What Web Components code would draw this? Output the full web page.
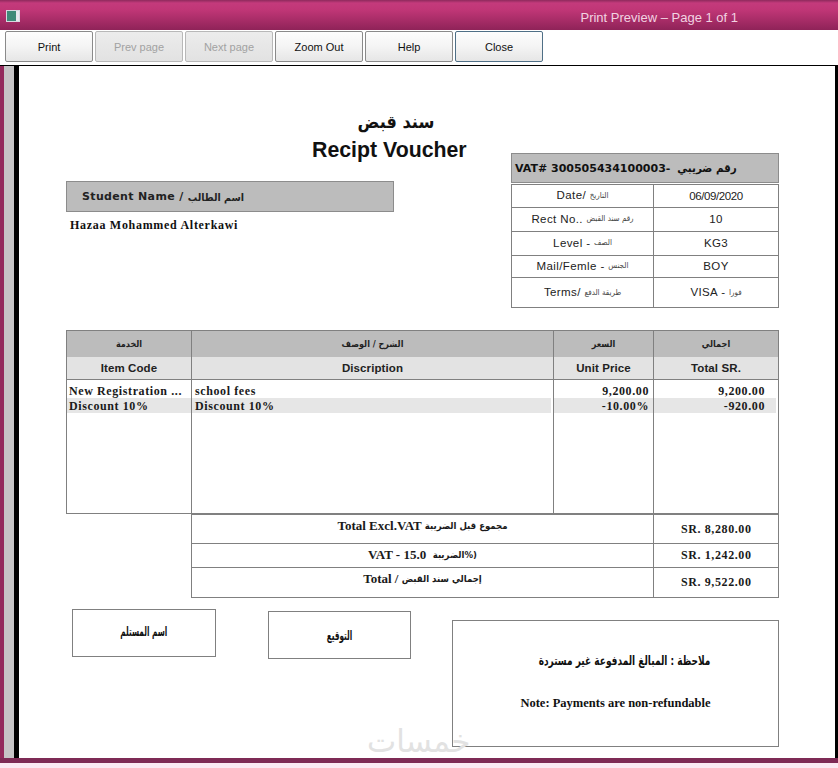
<!DOCTYPE html>
<html>
<head>
<meta charset="utf-8">
<title>Print Preview</title>
<style>
  html, body { margin: 0; padding: 0; background: #fff; overflow: hidden; }
</style>
</head>
<body>
<preview-window>
  <tool-button>Print</tool-button>
  <tool-button disabled>Prev page</tool-button>
  <tool-button disabled>Next page</tool-button>
  <tool-button>Zoom Out</tool-button>
  <tool-button>Help</tool-button>
  <tool-button focused>Close</tool-button>
  <receipt-page slot="page"></receipt-page>
</preview-window>

<script>
const SANS = '"Liberation Sans", "DejaVu Sans Condensed", "DejaVu Sans", sans-serif';
const SERIF = '"Liberation Serif", "DejaVu Sans Condensed", "DejaVu Sans", serif';
const ARABIC = '"DejaVu Sans Condensed", "DejaVu Sans", sans-serif';

class PreviewWindow extends HTMLElement {
  constructor() {
    super();
    this.attachShadow({ mode: 'open' });
    this.shadowRoot.innerHTML = `
      <style>
        :host { display: flex; flex-direction: column; width: 838px; height: 768px; overflow: hidden; background: #fff; }
        .title {
          height: 30px; flex: none; box-sizing: border-box; display: flex; align-items: center;
          padding: 4px 100px 0 6px; justify-content: space-between; color: #f2d3e2;
          font: 13px ${SANS};
          background: linear-gradient(#8e2a5c 0, #c43a7c 3px, #c03676 10px, #8f2358 30px);
        }
        .icon { width: 14px; height: 12px; margin-top: -3px; background: linear-gradient(90deg, #3f8a78 0 9px, #e8e8ee 9px); border: 1px solid #d8d8e0; box-sizing: border-box; }
        .tools { height: 36px; flex: none; box-sizing: border-box; display: flex; gap: 2px; padding: 1px 0 0 5px; background: #fff; border-bottom: 1px solid #000; }
        .body { flex: none; height: 692px; display: flex; }
        .edge { width: 4px; background: #932a5c; }
        .gutter { width: 10px; background: #c6c4c6; }
        .rule { width: 5px; background: #000; }
        .sheet { flex: 1; min-width: 0; background: #fff; }
        .rule.right { width: 3px; }
        .bottom { height: 5px; flex: none; background: #7e2a55; }
        .under { height: 5px; flex: none; background: #fbeaf3; }
      </style>
      <div class="title"><span class="icon"></span><span>Print Preview &ndash; Page 1 of 1</span></div>
      <div class="tools"><slot></slot></div>
      <div class="body">
        <div class="edge"></div><div class="gutter"></div><div class="rule"></div>
        <div class="sheet"><slot name="page"></slot></div>
        <div class="rule right"></div>
      </div>
      <div class="bottom"></div>
      <div class="under"></div>
    `;
  }
}

class ToolButton extends HTMLElement {
  constructor() {
    super();
    this.attachShadow({ mode: 'open' });
    this.shadowRoot.innerHTML = `
      <style>
        :host {
          display: flex; align-items: center; justify-content: center; box-sizing: border-box;
          width: 88px; height: 31px; border: 1px solid #8a8a8a; border-radius: 2px;
          font: 11px ${SANS}; color: #111;
          background: linear-gradient(#fdfdfd, #f4f4f4 50%, #e6e6e6);
        }
        :host([disabled]) { color: #a2a2a2; border-color: #b8b8b8; background: linear-gradient(#ececec, #e2e2e2); }
        :host([focused]) { border-color: #4f6f86; }
      </style>
      <slot></slot>
    `;
  }
}

class InfoTable extends HTMLElement {
  constructor() {
    super();
    this.attachShadow({ mode: 'open' });
    this.rows = [
      ['Date/ ', 'التاريخ', '06/09/2020', '', 23],
      ['Rect No.. ', 'رقم سند القبض', '10', '', 24],
      ['Level - ', 'الصف', 'KG3', '', 24],
      ['Mail/Femle - ', 'الجنس', 'BOY', '', 22],
      ['Terms/ ', 'طريقة الدفع', 'VISA - ', 'فورا', 30]
    ];
    const rows = this.rows.map(r => `
      <div class="row" style="height:${r[4]}px">
        <div class="cell first">${r[0]}<small>${r[1]}</small></div>
        <div class="cell ${r[2].length > 8 ? 'tight' : ''}">${r[2]}<small>${r[3]}</small></div>
      </div>`).join('');
    this.shadowRoot.innerHTML = `
      <style>
        :host { display: block; width: 268px; }
        .vat {
          box-sizing: border-box; height: 30px; background: #bcbcbc; border: 1px solid #8c8c8c;
          display: flex; align-items: center; padding: 0 3px; white-space: nowrap;
          font: bold 11px "DejaVu Sans", sans-serif; color: #111;
        }
        .vat b { font: bold 11.5px ${ARABIC}; margin-left: 7px; }
        .table { margin-top: 1px; border: 1px solid #808080; }
        .row { display: grid; grid-template-columns: 142px 1fr; box-sizing: border-box; border-bottom: 1px solid #808080; }
        .row:last-child { border-bottom: 0; margin-bottom: -1px; }
        .cell { display: flex; align-items: center; justify-content: center; box-sizing: border-box; padding-bottom: 2px; white-space: pre; font: 11.5px ${SANS}; letter-spacing: .4px; color: #222; }
        .tight { letter-spacing: -.4px; padding-bottom: 0; }
        .first { border-right: 1px solid #808080; }
        small { font: 8px ${ARABIC}; letter-spacing: 0; color: #444; }
      </style>
      <div class="vat">VAT# 300505434100003-<b>رقم ضريبي</b></div>
      <div class="table">${rows}</div>
    `;
  }
}

class ItemsTable extends HTMLElement {
  constructor() {
    super();
    this.attachShadow({ mode: 'open' });
    const heads = ['الخدمة', 'الشرح / الوصف', 'السعر', 'اجمالي'];
    const subs = ['Item Code', 'Discription', 'Unit Price', 'Total SR.'];
    const items = [
      ['New Registration ...', 'school fees', '9,200.00', '9,200.00'],
      ['Discount 10%', 'Discount 10%', '-10.00%', '-920.00']
    ];
    const cols = subs.map((sub, i) => `
      <div class="col ${i > 1 ? 'num' : ''} c${i}">
        <div class="head">${heads[i]}</div>
        <div class="sub">${sub}</div>
        <div class="items">
          ${items.map((row, n) => `<div class="line ${n === 1 ? 'shade' : ''}">${row[i]}</div>`).join('')}
        </div>
      </div>`).join('');
    this.shadowRoot.innerHTML = `
      <style>
        :host { display: block; width: 713px; }
        .grid { display: grid; grid-template-columns: 124px 362px 100px 125px; border: 1px solid #808080; box-sizing: border-box; width: 713px; }
        .col { display: flex; flex-direction: column; border-left: 1px solid #808080; min-width: 0; }
        .c0 { border-left: 0; }
        .head { height: 26px; background: #bcbcbc; display: flex; align-items: center; justify-content: center; font: bold 9px ${ARABIC}; color: #222; }
        .sub { height: 23px; background: #e3e3e3; border-bottom: 1px solid #808080; display: flex; align-items: center; justify-content: center; font: bold 11.5px ${SANS}; color: #222; letter-spacing: .1px; box-sizing: border-box; }
        .items { height: 133px; padding-top: 3px; box-sizing: border-box; font: bold 12px ${SERIF}; letter-spacing: .6px; color: #1a1a1a; }
        .line { height: 15px; line-height: 16px; padding-left: 2px; white-space: nowrap; overflow: hidden; }
        .c1 .line { padding-left: 3px; margin-right: 2px; }
        .num .line { text-align: right; padding: 0 4px 0 0; }
        .c3 .line { padding-right: 11px; margin-right: 2px; }
        .shade { background: #e6e6e6; }
      </style>
      <div class="grid">${cols}</div>
    `;
  }
}

class TotalsTable extends HTMLElement {
  constructor() {
    super();
    this.attachShadow({ mode: 'open' });
    const rows = [
      ['Total Excl.VAT ', 'مجموع قبل الضريبة', 'SR. 8,280.00', 29],
      ['VAT - 15.0 &nbsp;', 'الضريبة%)', 'SR. 1,242.00', 24],
      ['Total / ', 'إجمالي سند القبض', 'SR. 9,522.00', 30]
    ];
    this.shadowRoot.innerHTML = `
      <style>
        :host { display: block; width: 588px; margin-left: 125px; }
        .table { border: 1px solid #808080; border-bottom: 0; }
        .row { display: grid; grid-template-columns: 462px 1fr; border-bottom: 1px solid #808080; box-sizing: border-box; font: bold 13px ${SERIF}; color: #1a1a1a; }
        .label { display: flex; justify-content: center; align-items: flex-start; padding-top: 3px; border-right: 1px solid #808080; white-space: pre; line-height: 15px; }
        .label span { font: bold 9.5px/15px ${ARABIC}; }
        .value { display: flex; align-items: center; padding-left: 27px; font-size: 12px; letter-spacing: .6px; white-space: nowrap; }
      </style>
      <div class="table">
        ${rows.map(r => `<div class="row" style="height:${r[3]}px"><div class="label">${r[0]}<span>${r[1]}</span></div><div class="value">${r[2]}</div></div>`).join('')}
      </div>
    `;
  }
}

class NoteBox extends HTMLElement {
  constructor() {
    super();
    this.attachShadow({ mode: 'open' });
    this.shadowRoot.innerHTML = `
      <style>
        :host { display: flex; flex-direction: column; align-items: center; justify-content: center; box-sizing: border-box; border: 1px solid #808080; font: bold 12.5px ${SERIF}; color: #111; white-space: nowrap; }
      </style>
      <slot></slot>
    `;
  }
}

class ReceiptPage extends HTMLElement {
  constructor() {
    super();
    this.attachShadow({ mode: 'open' });
    this.shadowRoot.innerHTML = `
      <style>
        :host { display: block; position: relative; height: 692px; box-sizing: border-box; padding-left: 47px; font-family: ${SANS}; }
        .top { display: grid; grid-template-columns: 445px 268px; height: 241px; }
        .left { padding-top: 42px; }
        .right { padding-top: 87px; }
        .titles { width: 154px; margin-left: 246px; text-align: center; white-space: nowrap; color: #111; }
        .ar { font: bold 18px/28px ${ARABIC}; height: 28px; padding-left: 14px; }
        .en { font: bold 21.3px/26px ${SANS}; height: 26px; margin-top: 1px; }
        .student {
          width: 328px; height: 31px; box-sizing: border-box; margin-top: 18px; padding-left: 15px;
          display: flex; align-items: center; background: #bcbcbc; border: 1px solid #8c8c8c;
          font: bold 11px "DejaVu Sans", sans-serif; color: #222; letter-spacing: .35px; white-space: pre;
        }
        .student b { font: bold 10.5px ${ARABIC}; letter-spacing: 0; }
        .name { margin: 6px 0 0 4px; font: bold 12px/15px ${SERIF}; letter-spacing: .7px; color: #111; }
        items-table { margin-top: 23px; }
        .foot { display: flex; align-items: flex-start; }
        .box1 { width: 144px; height: 48px; margin: 11px 0 0 6px; padding-bottom: 4px; }
        .box2 { width: 143px; height: 48px; margin: 13px 0 0 52px; }
        .box3 { width: 327px; height: 127px; margin: 22px 0 0 41px; gap: 28px; padding-bottom: 4px; }
        .slim { display: inline-block; font: bold 13px ${ARABIC}; transform: scaleX(.62); }
        .note-ar { display: inline-block; margin-left: 18px; font: bold 13px ${ARABIC}; transform: scaleX(.77); }
        .mark { position: absolute; left: 348px; top: 660px; font: 31px/30px "DejaVu Sans", sans-serif; color: #e2e2e2; white-space: nowrap; }
      </style>
      <div class="top">
        <div class="left">
          <div class="titles">
            <div class="ar">سند قبض</div>
            <div class="en">Recipt Voucher</div>
          </div>
          <div class="student">Student Name / <b>اسم الطالب</b></div>
          <div class="name">Hazaa Mohammed Alterkawi</div>
        </div>
        <div class="right"><info-table></info-table></div>
      </div>
      <items-table></items-table>
      <totals-table></totals-table>
      <div class="foot">
        <note-box class="box1"><span class="slim">اسم المستلم</span></note-box>
        <note-box class="box2"><span class="slim">التوقيع</span></note-box>
        <note-box class="box3">
          <div class="note-ar">ملاحظة : المبالغ المدفوعة غير مستردة</div>
          <div>Note: Payments are non-refundable</div>
        </note-box>
      </div>
      <div class="mark">خمسات</div>
    `;
  }
}

customElements.define('tool-button', ToolButton);
customElements.define('info-table', InfoTable);
customElements.define('items-table', ItemsTable);
customElements.define('totals-table', TotalsTable);
customElements.define('note-box', NoteBox);
customElements.define('receipt-page', ReceiptPage);
customElements.define('preview-window', PreviewWindow);
</script>
</body>
</html>
